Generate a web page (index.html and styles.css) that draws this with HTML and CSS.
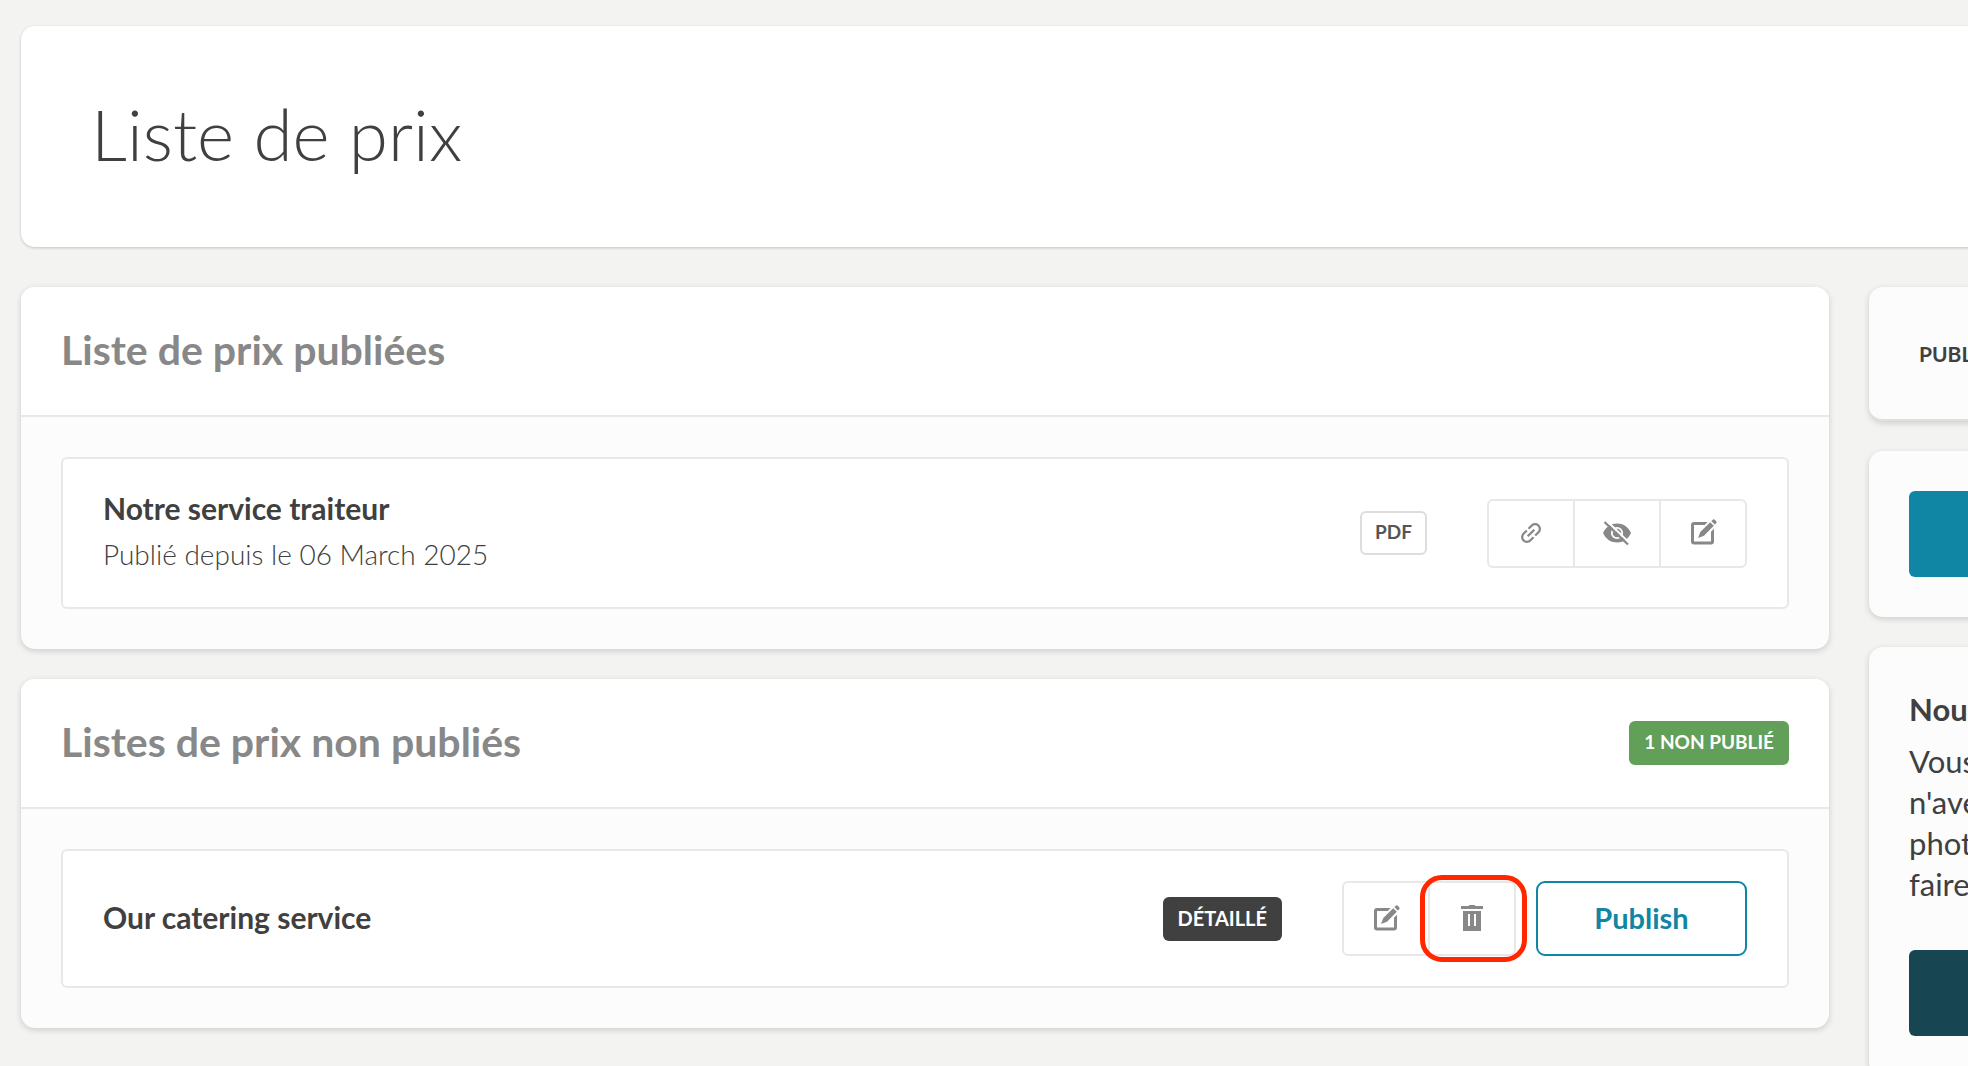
FILE: index.html
```html
<!DOCTYPE html>
<html lang="fr">
<head>
    <meta charset="UTF-8">
    <meta name="viewport" content="width=device-width, initial-scale=1.0">
    <title>Liste de prix</title>
    <link rel="stylesheet" href="styles.css">
</head>
<body>
    <svg class="sprite" aria-hidden="true">
        <symbol id="icon-link" viewBox="0 0 24 24">
            <path transform="rotate(-45 12 12)" d="M3.9 12c0-1.71 1.39-3.1 3.1-3.1h4V7H7c-2.76 0-5 2.24-5 5s2.24 5 5 5h4v-1.9H7c-1.71 0-3.1-1.39-3.1-3.1zM8 13h8v-2H8v2zm9-6h-4v1.9h4c1.71 0 3.1 1.39 3.1 3.1s-1.39 3.1-3.1 3.1h-4V17h4c2.76 0 5-2.24 5-5s-2.24-5-5-5z"/>
        </symbol>
        <symbol id="icon-hide" viewBox="0 0 28 28">
            <path d="M0 14C3 7.500 8 4.500 14 4.500S25 7.500 28 14C25 20.500 20 23.500 14 23.500S3 20.500 0 14z"/>
            <circle cx="14" cy="14" r="5.200" fill="none" stroke="#fff" stroke-width="1.800"/>
            <path d="M11.500 13.500a2.800 2.800 0 0 1 2.500-2.500" fill="none" stroke="#fff" stroke-width="1.600"/>
            <path d="M3.500 1.500L27 24.500" stroke="#fff" stroke-width="2"/>
            <path d="M1.500 3L25 25.500" stroke="currentColor" stroke-width="2.400"/>
        </symbol>
        <symbol id="icon-edit" viewBox="0 0 28 28">
            <rect x="3.500" y="4.500" width="20" height="19.500" rx="1.500" fill="none" stroke="currentColor" stroke-width="3"/>
            <path d="M9 19l2.500-7L21 2.500l4-2.500 3 3-2 4-9.500 9.500z" fill="#fff" stroke="#fff" stroke-width="2.500"/>
            <path d="M9 19l2.300-6L21.200 3.200l3.600 3.600-9.800 9.900zM22.300 2.100l1.200-1.200a1.800 1.800 0 0 1 2.500 0l1 1a1.800 1.800 0 0 1 0 2.500l-1.200 1.200z"/>
        </symbol>
        <symbol id="icon-trash" viewBox="0 0 28 28">
            <path d="M11 0h6v1h8v3H3V1h8z"/>
            <path fill-rule="evenodd" d="M5 6h18v20H5zM10 9v12h2V9zM16 9v12h2V9z"/>
        </symbol>
    </svg>

    <div class="page">
        <header class="page-header">
            <h1>Liste de prix</h1>
        </header>

        <main class="column">
            <section class="card">
                <div class="card-header">
                    <h2>Liste de prix publiées</h2>
                </div>
                <div class="card-body">
                    <article class="item">
                        <div class="item-info">
                            <h3>Notre service traiteur</h3>
                            <p>Publié depuis le 06 March 2025</p>
                        </div>
                        <span class="badge badge-outline">PDF</span>
                        <div class="button-group">
                            <button type="button" class="icon-button" aria-label="Copier le lien"><svg class="icon"><use href="#icon-link"/></svg></button>
                            <button type="button" class="icon-button" aria-label="Masquer"><svg class="icon"><use href="#icon-hide"/></svg></button>
                            <button type="button" class="icon-button" aria-label="Modifier"><svg class="icon"><use href="#icon-edit"/></svg></button>
                        </div>
                    </article>
                </div>
            </section>

            <section class="card">
                <div class="card-header">
                    <h2>Listes de prix non publiés</h2>
                    <span class="badge badge-green">1 NON PUBLIÉ</span>
                </div>
                <div class="card-body">
                    <article class="item">
                        <div class="item-info">
                            <h3>Our catering service</h3>
                        </div>
                        <span class="badge badge-dark">DÉTAILLÉ</span>
                        <div class="actions">
                            <div class="button-group">
                                <button type="button" class="icon-button tall" aria-label="Modifier"><svg class="icon"><use href="#icon-edit"/></svg></button>
                                <button type="button" class="icon-button tall highlighted" aria-label="Supprimer"><svg class="icon"><use href="#icon-trash"/></svg></button>
                            </div>
                            <button type="button" class="publish-button">Publish</button>
                        </div>
                    </article>
                </div>
            </section>
        </main>

        <aside class="column">
            <section class="side-card side-status">
                <span>PUBL</span>
            </section>
            <section class="side-card">
                <button type="button" class="side-button" aria-label="Ajouter"></button>
            </section>
            <section class="side-card">
                <h3>Nou</h3>
                <p>Vous<br>n'ave<br>phot<br>faire</p>
                <button type="button" class="side-button side-button-dark" aria-label="Contact"></button>
            </section>
        </aside>
    </div>
</body>
</html>
```

FILE: styles.css
```css
* {
    box-sizing: border-box;
}
body {
    margin: 0;
    background-color: #f3f3f1;
    color: #404040;
    font-family: Lato, "Open Sans", sans-serif;
    overflow-x: hidden;
}
h1, h2, h3, p {
    margin: 0;
}
button {
    font-family: inherit;
    cursor: pointer;
}
.sprite {
    display: none;
}

/* the side column runs past the right edge of the window */
.page {
    display: grid;
    grid-template-columns: minmax(0, 1fr) 420px;
    gap: 40px;
    margin-right: -321px;
    padding: 26px 0 0 21px;
    overflow: hidden;
}
.page-header {
    grid-column: 1 / -1;
    padding: 64px 70px 69px;
    background: white;
    border-radius: 14px;
    box-shadow: 0 1px 3px rgba(0,0,0,0.2);
}
h1 {
    font-size: 71px;
    line-height: 88px;
    font-weight: 300;
}
.column {
    display: flex;
    flex-direction: column;
    gap: 30px;
}

/* cards */
.card {
    background: #fcfcfc;
    border-radius: 14px;
    box-shadow: 0 2px 6px rgba(0,0,0,0.16);
    overflow: hidden;
}
.card-header {
    display: flex;
    align-items: center;
    justify-content: space-between;
    height: 130px;
    padding: 0 40px;
    background: white;
    border-bottom: 2px solid #e8e8e8;
}
h2 {
    padding-bottom: 3px;
    color: #888;
    font-size: 41px;
    line-height: 48px;
    font-weight: 700;
}
.card-body {
    padding: 40px;
}
.item {
    display: flex;
    align-items: center;
    padding: 30px 40px;
    background: white;
    border: 2px solid #e8e8e8;
    border-radius: 6px;
}
.item-info {
    flex: 1;
    padding-bottom: 4px;
}
h3 {
    font-size: 30px;
    line-height: 38px;
    font-weight: 700;
}
.item-info p {
    margin-top: 8px;
    font-size: 28px;
    line-height: 38px;
    font-weight: 300;
}

/* badges */
.badge {
    height: 44px;
    padding: 0 15px;
    border-radius: 6px;
    color: white;
    font-size: 19px;
    line-height: 42px;
    font-weight: 700;
}
.badge-outline {
    border: 2px solid #ddd;
    padding: 0 13px;
    color: #555;
    line-height: 38px;
}
.badge-dark {
    background: #404040;
    font-size: 20px;
}
.badge-green {
    background: #629f59;
}
.item .badge {
    margin-right: 60px;
}

/* buttons */
.actions {
    display: flex;
    gap: 20px;
}
.button-group {
    display: flex;
}
.item {
    min-height: 139px;
}
.item:has(p) {
    min-height: 152px;
}
.icon-button {
    display: flex;
    align-items: center;
    justify-content: center;
    width: 88px;
    height: 69px;
    padding: 0;
    background: white;
    border: 2px solid #e8e8e8;
    color: #888;
}
.icon-button + .icon-button {
    margin-left: -2px;
}
.icon-button:first-child {
    border-radius: 6px 0 0 6px;
}
.icon-button:last-child {
    border-radius: 0 6px 6px 0;
}
.tall {
    height: 75px;
}
.icon {
    width: 28px;
    height: 28px;
    fill: currentColor;
}
.highlighted {
    position: relative;
}
.highlighted::after {
    content: "";
    position: absolute;
    inset: -8px -13px -8px -10px;
    border: 5px solid #ff2600;
    border-radius: 22px;
}
.publish-button {
    min-width: 211px;
    padding-bottom: 3px;
    background: white;
    border: 2px solid #1085a4;
    border-radius: 9px;
    color: #1085a4;
    font-size: 29px;
    font-weight: 700;
}

/* side column */
.side-card {
    padding: 40px;
    background: #fcfcfc;
    border-radius: 14px;
    box-shadow: 0 2px 6px rgba(0,0,0,0.16);
}
.side-card h3 {
    font-size: 31px;
    line-height: 44px;
}
.side-card p {
    margin: 10px 0 45px;
    font-size: 31px;
    line-height: 41px;
}
.side-status {
    display: flex;
    align-items: center;
    height: 134px;
    padding: 0 50px;
    border-bottom: 2px solid #e0e0e0;
    font-size: 21px;
    font-weight: 700;
}
.side-button {
    display: block;
    width: 100%;
    height: 86px;
    background: #1085a4;
    border: none;
    border-radius: 6px;
}
.side-button-dark {
    background: #174652;
}
```
